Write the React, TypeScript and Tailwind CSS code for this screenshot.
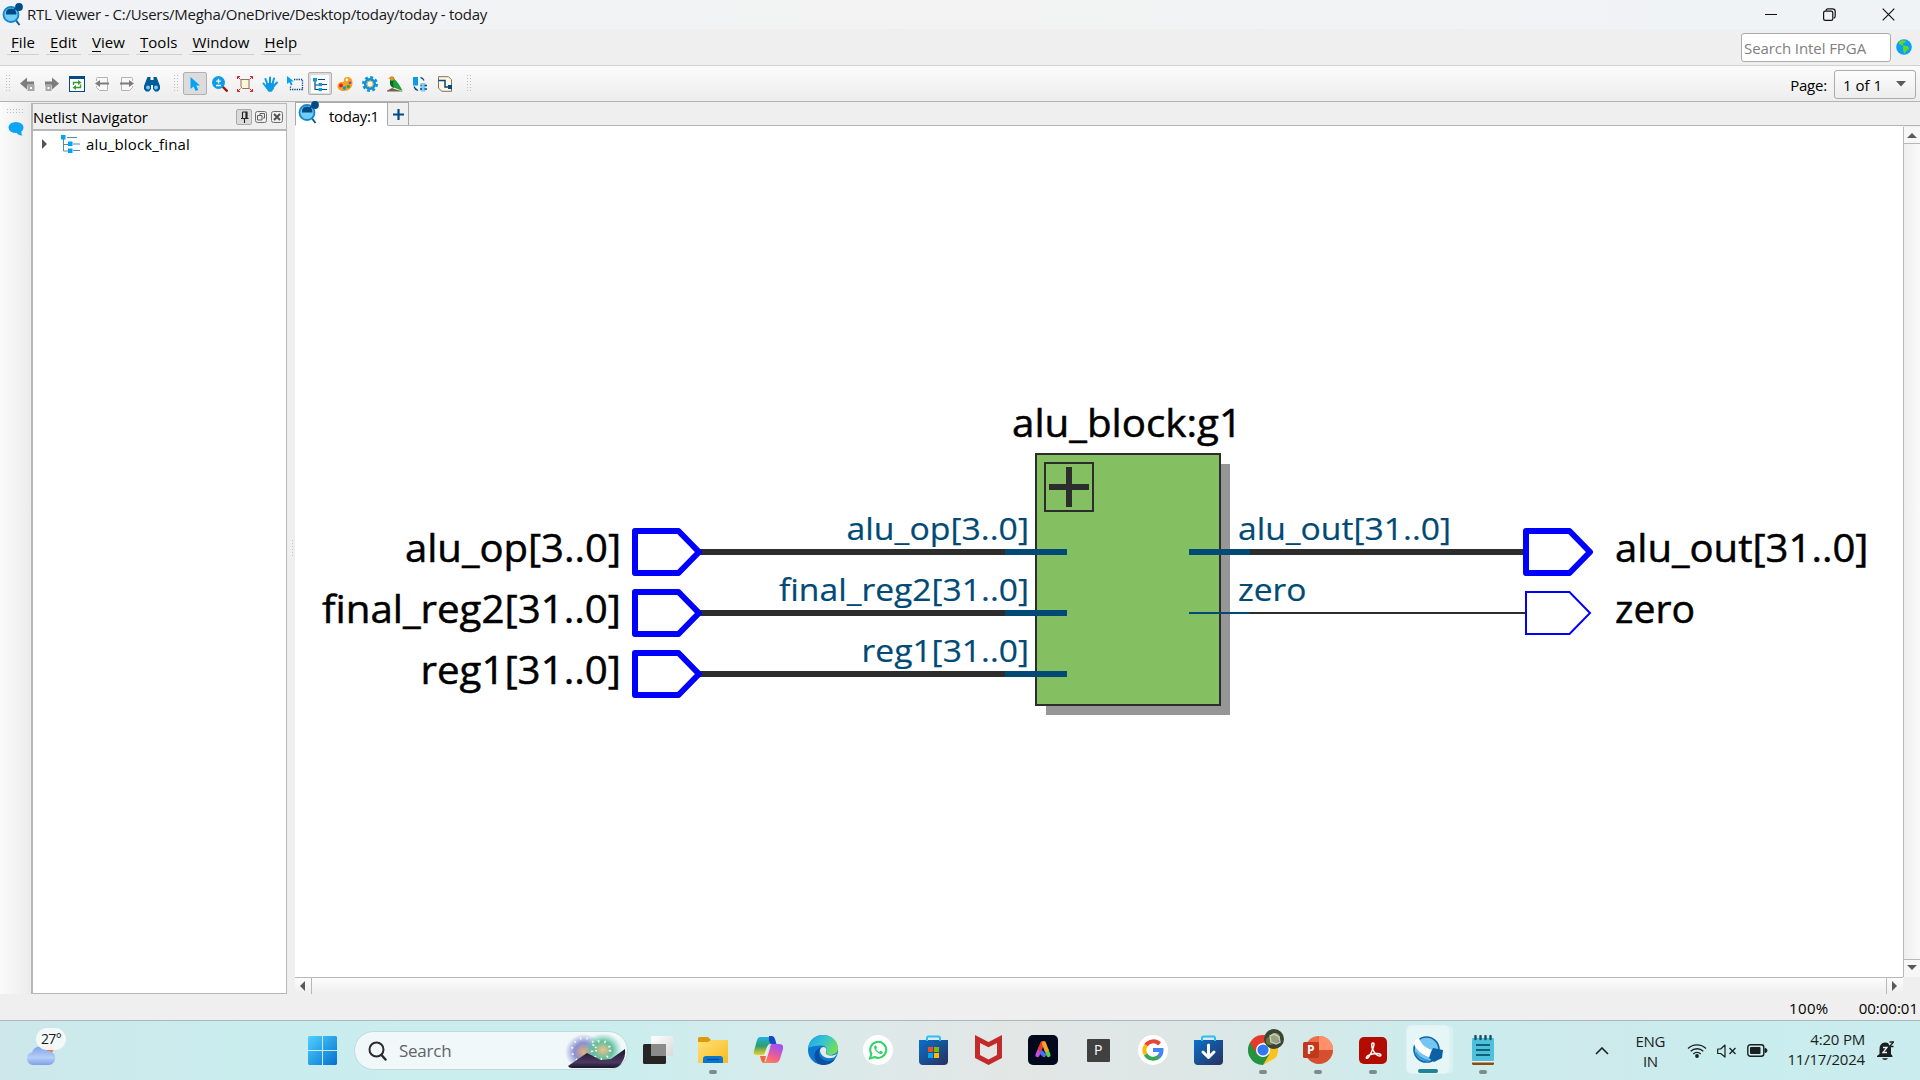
import type { ReactNode } from 'react';

const NAVY = '#004a86';
const SKY = '#00a3f5';

function Svg({ w, h, children, box }: { w: number; h: number; children: ReactNode; box?: string }) {
  return (
    <svg width={w} height={h} viewBox={box ?? `0 0 ${w} ${h}`} fill="none" className="block shrink-0">
      {children}
    </svg>
  );
}

function ViewerLogo() {
  return (
    <Svg w={21} h={24}>
      <path d="M12.500 15.500 17.500 22" stroke="#0b5a96" strokeWidth="2" />
      <circle cx="9" cy="11.500" r="7.500" fill="#6fcdf8" stroke="#1187c9" strokeWidth="1.800" />
      <path d="M4 11.500q-.5-6 5-6t5.500 6z" fill={NAVY} />
      <path d="M12 6.500l4-2" stroke={NAVY} strokeWidth="1.500" />
      <circle cx="17" cy="4" r="3.900" fill={NAVY} />
    </Svg>
  );
}

function GripV() {
  return (
    <svg width="5" height="17" className="block shrink-0" fill="#bdbdbd">
      {[0, 3, 6, 9, 12, 15].map((y) => (
        <g key={y}>
          <rect x="0" y={y} width="1" height="1" />
          <rect x="3" y={y} width="1" height="1" />
        </g>
      ))}
    </svg>
  );
}

const backIcon = (
  <Svg w={16} h={16}>
    <path d="M1 7.500 8 1.500v4h7v4H8v4z" fill="#7d7d7d" />
    <rect x="8.500" y="8" width="7" height="7" fill="#a8a8a8" />
    <rect x="11" y="11" width="2" height="2" fill="#fff" />
  </Svg>
);
const forwardIcon = (
  <Svg w={16} h={16}>
    <path d="M15 7.500 8 1.500v4H1v4h7v4z" fill="#7d7d7d" />
    <rect x="1.500" y="8" width="6" height="7" fill="#a8a8a8" />
    <rect x="3.500" y="11" width="2" height="2" fill="#fff" />
  </Svg>
);
const refreshIcon = (
  <Svg w={16} h={16}>
    <rect x=".5" y=".5" width="15" height="15" fill="#fff" stroke={NAVY} />
    <rect x="0" y="0" width="16" height="3" fill={NAVY} />
    <path d="M4.500 9V6.500h5.500M11.500 8.500V11.500H6" stroke="#3d9a35" strokeWidth="1.400" />
    <path d="M9 4l3.500 2.500L9 9zM7 9l-3.500 2.500L7 14z" fill="#3d9a35" />
  </Svg>
);
const pageBackIcon = (
  <Svg w={16} h={16}>
    <path d="M2.500 5V2.500q0-1 1-1h10v13h-8l-3-3V10" fill="#f8f8f8" stroke="#b4b4b4" />
    <path d="M1 7.500 6 4v2.500h9v2H6V11z" fill="#7d7d7d" />
  </Svg>
);
const pageForwardIcon = (
  <Svg w={16} h={16}>
    <path d="M13.500 5V2.500q0-1-1-1h-10v13h8l3-3V10" fill="#f8f8f8" stroke="#b4b4b4" />
    <path d="M15 7.500 10 4v2.500H1v2h9V11z" fill="#7d7d7d" />
  </Svg>
);
const binocularsIcon = (
  <Svg w={16} h={16}>
    <path d="M3.500 1h3v3h3V1h3l1 2.500L16 10v3l-2 2.500h-3L9 13V9H7v4l-2 2.500H2L0 13v-3l2.500-6.500z" fill="#005a9c" />
    <circle cx="4" cy="11.500" r="1.900" fill="#7ecbf3" />
    <circle cx="12" cy="11.500" r="1.900" fill="#7ecbf3" />
  </Svg>
);
const pointerIcon = (
  <Svg w={16} h={16}>
    <path d="M3.500 1v12l3-2.600L8.700 15l2.600-1.200L9.200 9.500H13z" fill={SKY} />
  </Svg>
);
const zoomIcon = (
  <Svg w={16} h={16}>
    <path d="M10.500 10.500l5 5" stroke="#a31515" strokeWidth="2.400" />
    <circle cx="6.500" cy="6.500" r="6.500" fill="#0c9ce8" />
    <path d="M6.500 2.800v4.600M4.200 5.100h4.600M4 9.500h5" stroke="#fff" strokeWidth="1.300" />
  </Svg>
);
const fitIcon = (
  <Svg w={16} h={16}>
    <path d="M4 3.500h8v9H5.500L4 11z" fill="#fdf4dc" stroke="#8a7560" />
    <g stroke="#e0202a">
      <path d="M.5 3V.5H3M.5.5l3 3M13 .5h2.500V3M15.500.5l-3 3M.5 13v2.500H3M.5 15.500l3-3M13 15.500h2.500V13M15.500 15.500l-3-3" />
    </g>
  </Svg>
);
const handIcon = (
  <Svg w={16} h={16}>
    <path
      d="M5 12 1.500 7.500M5.500 8.500 3.500 3M8 8V1.500M10.300 8.500 12 2.500M11.800 10l3.200-3.500"
      stroke="#0b9be6"
      strokeWidth="2"
      strokeLinecap="round"
    />
    <path d="M4 8.500 6 7h5l1.800 1.500-1 4.500-2.300 2.800H6.500L4 12z" fill="#0b9be6" />
  </Svg>
);
const selectIcon = (
  <Svg w={18} h={16}>
    <path d="M1 0v8l2.200-1.800L5 9.500l1.700-.9L5 5.500h3z" fill={SKY} />
    <path d="M8 3.500h8.500v10h-12V10" stroke={NAVY} strokeWidth="1.300" strokeDasharray="1.300 1" />
  </Svg>
);
const hierarchyIcon = (
  <Svg w={18} h={18}>
    <rect x="0" y="0" width="18" height="18" fill="#fff" />
    <path d="M4 5v9.500h4M4 10h4M7 4.500h7M11 9.500h5M11 14.500h5" stroke={NAVY} strokeWidth="1.200" />
    <rect x="2" y="3" width="4" height="3.500" fill="#0b9be6" />
    <rect x="7.500" y="8" width="3.500" height="3.200" fill="#0b9be6" />
    <rect x="7.500" y="13" width="3.500" height="3.200" fill="#0b9be6" />
  </Svg>
);
const paletteIcon = (
  <Svg w={16} h={16}>
    <path d="M10 1c4 0 5.500 2.500 5.500 6 0 4.500-3.500 8-8.500 8-4 0-6.500-2-6.500-4.500 0-3 2-4.500 4.500-4.500 1 0 2.500-.2 2-2C6.700 2.300 8 1 10 1z" fill="#f9a01f" />
    <circle cx="9.800" cy="3.800" r="1.300" fill="#fff" />
    <circle cx="13" cy="6.800" r="1.400" fill="#8e44c9" />
    <circle cx="4" cy="9.500" r="2" fill="#e0242a" />
    <circle cx="7.500" cy="12" r="1.800" fill="#0b9be6" />
    <circle cx="11.300" cy="10.500" r="1.800" fill="#3aa537" />
  </Svg>
);
const gearIcon = (
  <Svg w={16} h={16}>
    <circle cx="8" cy="8" r="6.700" stroke="#0b93dd" strokeWidth="2.600" strokeDasharray="2.900 2.360" />
    <circle cx="8" cy="8" r="4.700" fill="#fff7e0" stroke="#0b93dd" strokeWidth="2.800" />
    <circle cx="8" cy="8" r="3" stroke="#d9b45c" strokeWidth="1" />
  </Svg>
);
const birdIcon = (
  <Svg w={16} h={16}>
    <path d="M0 14.500 5 12l4 1.500L16 15.500H0z" fill="#7b5f50" />
    <path d="M3 1.200c2-1.500 4.500-.5 4.500 2C9.500 5 12.500 8 15.500 15L8 12C4 11.500 2.300 8 3.200 4z" fill="#1f9e3a" />
    <path d="M3.200 4.500C2.300 8 3.500 11 7 12c-1-2-1-5-.5-7z" fill="#0d6b25" />
    <path d="M1 2.500 3.200 1C5 0 7.300 1 7 3.500 5.500 5.500 3.500 4.500 3.200 3z" fill="#f28a1b" />
  </Svg>
);
const swapIcon = (
  <Svg w={16} h={16}>
    <rect x="1" y="1" width="5" height="8.500" fill="#0b9be6" />
    <rect x="8.500" y="7" width="5" height="8.500" fill="#7ecbf3" />
    <path d="M8.500 1.500q2.500.5 3.500 3M2 10.500q1 3 4 4M8.500 9.500h1M12.500 9.500h2.500M8 13h2M12.500 13h2.500" stroke={NAVY} strokeWidth="1.300" />
  </Svg>
);
const netPageIcon = (
  <Svg w={16} h={16}>
    <path d="M1.500.7h10l3 3v11.600H5l-3.500-3z" fill="#fff8e3" stroke="#80705c" />
    <path d="M1.500 4.500h6.500v6.500h7" stroke={NAVY} strokeWidth="1.500" />
    <rect x="11" y="9" width="4" height="4" fill={NAVY} />
  </Svg>
);

function Cell({ children }: { children: ReactNode }) {
  return <div className="flex h-6 w-[25px] shrink-0 items-center justify-center">{children}</div>;
}

function PressedCell({ children }: { children: ReactNode }) {
  return (
    <div className="flex h-[23px] w-[25px] shrink-0 items-center justify-center">
      <div className="flex h-[23px] w-6 shrink-0 items-center justify-center rounded-[2px] border border-[#b0b0b0] bg-[#dcdcdc]">
        {children}
      </div>
    </div>
  );
}

const menus = ['File', 'Edit', 'View', 'Tools', 'Window', 'Help'];

function TitleBar() {
  return (
    <div className="flex h-[29px] items-center bg-[linear-gradient(90deg,#f0f2f6_0%,#f3f3f3_50%,#eff3f6_100%)]">
      <div className="mr-1 ml-[2px]">
        <ViewerLogo />
      </div>
      <span className="text-[15px] tracking-[-0.275px] text-[#191919]">
        RTL Viewer - C:/Users/Megha/OneDrive/Desktop/today/today - today
      </span>
      <div className="mr-[25px] ml-auto flex items-center">
        <Svg w={12} h={12}>
          <path d="M0 5.500h12" stroke="#111" />
        </Svg>
        <div className="ml-[46px]">
          <Svg w={13} h={13}>
            <rect x=".6" y="3.100" width="9.200" height="9.200" rx="1.600" stroke="#111" strokeWidth="1.200" />
            <path d="M3 2.800q0-2 2-2h4.500q2.700 0 2.700 2.700V8q0 2-1.500 2.200" stroke="#111" strokeWidth="1.200" />
          </Svg>
        </div>
        <div className="ml-[46px]">
          <Svg w={13} h={13}>
            <path d="M.7.7l11.600 11.600M12.300.7.7 12.300" stroke="#111" strokeWidth="1.200" />
          </Svg>
        </div>
      </div>
    </div>
  );
}

function MenuBar() {
  return (
    <div className="flex h-[37px] items-start border-b border-[#d2d2d2] bg-[#efefef] pl-[7px]">
      <div className="flex gap-[7px]">
        {menus.map((m) => (
          <div key={m} className="flex h-[26px] items-center border-b border-[#d0d0d0] px-1 pt-[2px] text-[15px] tracking-[0.06px]">
            <span>
              <span className="underline underline-offset-[3px]">{m[0]}</span>
              {m.slice(1)}
            </span>
          </div>
        ))}
      </div>
      <div className="mt-1 mr-2 ml-auto flex items-center">
        <div className="flex h-[29px] w-[150px] items-center rounded-[3px] border border-[#ababab] bg-white pt-[2px] pl-[2px] text-[15px] tracking-[-0.08px] whitespace-nowrap text-[#808080]">
          Search Intel FPGA
        </div>
        <div className="mt-[-2px] ml-[5px]">
          <Svg w={16} h={16} box="0 0 17 17">
            <circle cx="8.500" cy="8.500" r="8.300" fill="#0b9ff5" />
            <path d="M3.500 2.500C6 .8 9 1 11 2l-1.500 2-2.500.5L8 6.500 6 7 3 5z M7.500 7l5.500.8.8 2.700-2.800 2.200-2 3.300-1.500-3.800z" fill="#62d81f" />
          </Svg>
        </div>
      </div>
    </div>
  );
}

function ToolBar() {
  return (
    <div className="flex h-9 items-center border-b border-[#b4b4b4] bg-gradient-to-b from-[#fbfbfb] to-[#ededed] pl-[6px]">
      <GripV />
      <div className="ml-[3px] flex">
        <Cell>{backIcon}</Cell>
        <Cell>{forwardIcon}</Cell>
        <Cell>{refreshIcon}</Cell>
        <Cell>{pageBackIcon}</Cell>
        <Cell>{pageForwardIcon}</Cell>
        <Cell>{binocularsIcon}</Cell>
      </div>
      <div className="ml-[10px]">
        <GripV />
      </div>
      <div className="ml-[3px] flex items-center">
        <PressedCell>{pointerIcon}</PressedCell>
        <Cell>{zoomIcon}</Cell>
        <Cell>{fitIcon}</Cell>
        <Cell>{handIcon}</Cell>
        <Cell>{selectIcon}</Cell>
        <PressedCell>{hierarchyIcon}</PressedCell>
        <Cell>{paletteIcon}</Cell>
        <Cell>{gearIcon}</Cell>
        <Cell>{birdIcon}</Cell>
        <Cell>{swapIcon}</Cell>
        <Cell>{netPageIcon}</Cell>
      </div>
      <div className="ml-[10px]">
        <GripV />
      </div>
      <div className="mr-1 ml-auto flex items-center text-[15px]">
        <span className="mt-[3px] mr-[7px] tracking-[-0.2px]">Page:</span>
        <div className="mt-[1px] flex h-[29px] w-[82px] items-center rounded-[3px] border border-[#ababab] bg-gradient-to-b from-[#fdfdfd] to-[#ececec] pl-[8px]">
          <span className="mt-[2px]">1 of 1</span>
          <div className="ml-[14px]">
            <Svg w={10} h={6}>
              <path d="M0 0h10L5 5.500z" fill="#5a5a5a" />
            </Svg>
          </div>
        </div>
      </div>
    </div>
  );
}

function NetlistPanel() {
  return (
    <div className="mt-px flex w-64 shrink-0 flex-col border border-l-2 border-[#b7b7b7] bg-white">
      <div className="flex h-[27px] shrink-0 items-center border-b-2 border-[#b7b7b7] bg-[#efefef] pr-[3px]">
        <span className="mt-[2px] text-[15px] tracking-[-0.12px]">Netlist Navigator</span>
        <div className="ml-auto flex items-center">
          <div className="flex h-4 w-4 items-center justify-center rounded-[2px] border border-[#aaa] bg-[#dadada]">
            <Svg w={9} h={12}>
              <path d="M2.500 1h4.500v6M2.500 1v6M6 1v6M1 7.500h7.500M4.500 8v4" stroke="#222" strokeWidth="1.100" />
            </Svg>
          </div>
          <div className="ml-[3px]">
            <Svg w={12} h={12}>
              <rect x=".5" y=".5" width="11" height="11" rx="2" fill="#eee" stroke="#707070" />
              <path d="M5 4V2.500h4.500V7H8M2.500 4.500H7V9H2.500z" stroke="#606060" />
            </Svg>
          </div>
          <div className="ml-1">
            <Svg w={12} h={12}>
              <rect x=".5" y=".5" width="11" height="11" rx="2" fill="#eee" stroke="#707070" />
              <path d="M3 3l6 6M9 3 3 9" stroke="#505050" strokeWidth="1.900" />
            </Svg>
          </div>
        </div>
      </div>
      <div className="flex h-[25px] items-center pl-[9px]">
        <Svg w={5} h={10}>
          <path d="M0 0l5 5-5 5z" fill="#555" />
        </Svg>
        <div className="ml-[14px]">
          <Svg w={19} h={18}>
            <path d="M2.500 3v13H8M2.500 9.500H8M6 2.500h10M12 9h7M12 15.500h7" stroke="#5a87ad" />
            <rect x="0" y="0" width="4.500" height="4.500" fill={SKY} />
            <rect x="7" y="6.500" width="4.500" height="4.500" fill={SKY} />
            <rect x="7" y="13.500" width="4.500" height="4.500" fill={SKY} />
          </Svg>
        </div>
        <span className="mt-[2px] ml-[6px] text-[15px] tracking-[0.15px]">alu_block_final</span>
      </div>
    </div>
  );
}

type Label = { t: string; x: number; y: number; w: number };
const portLabels: Label[] = [
  { t: 'alu_op[3..0]', x: 405, y: 562, w: 216 },
  { t: 'final_reg2[31..0]', x: 322, y: 623, w: 299 },
  { t: 'reg1[31..0]', x: 420.5, y: 684, w: 200.5 },
  { t: 'alu_block:g1', x: 1012, y: 437, w: 230 },
  { t: 'alu_out[31..0]', x: 1615, y: 562, w: 253.5 },
  { t: 'zero', x: 1615, y: 623, w: 80 },
];
const pinLabels: Label[] = [
  { t: 'alu_op[3..0]', x: 846.5, y: 540, w: 182.5 },
  { t: 'final_reg2[31..0]', x: 779, y: 601, w: 250 },
  { t: 'reg1[31..0]', x: 861.5, y: 662, w: 167.5 },
  { t: 'alu_out[31..0]', x: 1238, y: 540, w: 213 },
  { t: 'zero', x: 1238, y: 601, w: 68.5 },
];

function Schematic() {
  return (
    <svg width="1608" height="851" viewBox="295 126 1608 851" fill="none" className="block font-['Open_Sans',sans-serif]">
      <rect x="1046" y="464" width="184" height="251" fill="#969696" />
      <rect x="1036" y="454" width="184" height="251" fill="#84c061" stroke="#2d2d2d" strokeWidth="2" />
      <rect x="1045" y="463" width="48" height="48" stroke="#2d2d2d" strokeWidth="2" />
      <path d="M1049 487h40M1069 467v40" stroke="#2d2d2d" strokeWidth="6" />
      <path d="M700 552h305M700 613h305M700 674h305M1250 552h276" stroke="#2d2d2d" strokeWidth="6" />
      <path d="M1005 552h62M1005 613h62M1005 674h62M1189 552h61" stroke="#004a75" strokeWidth="6" />
      <path d="M1189 613h61" stroke="#004a75" strokeWidth="2" />
      <path d="M1250 613h275" stroke="#2d2d2d" strokeWidth="2" />
      {[552, 613, 674].map((y) => (
        <path key={y} d={`M635 ${y - 21}h43.500L699 ${y}l-20.500 21H635z`} fill="#fff" stroke="#00f" strokeWidth="6" strokeLinejoin="round" />
      ))}
      <path d="M1526 531h43.500L1590 552l-20.500 21H1526z" stroke="#00f" strokeWidth="6" strokeLinejoin="round" />
      <path d="M1526 592h43.500L1590 613l-20.500 21H1526z" fill="#fff" stroke="#00f" strokeWidth="2" />
      {portLabels.map((l) => (
        <text key={l.t} x={l.x} y={l.y} textLength={l.w} lengthAdjust="spacingAndGlyphs" fontSize="38" fill="#000" stroke="#000" strokeWidth=".5">
          {l.t}
        </text>
      ))}
      {pinLabels.map((l) => (
        <text key={l.t} x={l.x} y={l.y} textLength={l.w} lengthAdjust="spacingAndGlyphs" fontSize="31.500" fill="#004a75" stroke="#004a75" strokeWidth=".2">
          {l.t}
        </text>
      ))}
    </svg>
  );
}

function Workspace() {
  return (
    <div className="flex min-w-0 flex-1 flex-col">
      <div className="flex h-6 shrink-0 items-end border-b border-[#b4b4b4] bg-[#efefef]">
        <div className="mb-[-1px] flex h-6 w-[93px] items-center border border-[#a8a8a8] border-b-white bg-white pl-[2px]">
          <div className="mt-[-3px]">
            <ViewerLogo />
          </div>
          <span className="mt-[4px] ml-[10px] text-[15px] tracking-[-0.3px]">today:1</span>
        </div>
        <div className="flex h-[23px] w-[21px] items-center justify-center border border-b-0 border-l-0 border-[#a8a8a8] bg-[#f0f0f0]">
          <Svg w={11} h={11}>
            <path d="M5.500 0v11M0 5.500h11" stroke={NAVY} strokeWidth="2.200" />
          </Svg>
        </div>
      </div>
      <div className="flex h-[851px]">
        <div className="w-[1608px] shrink-0 bg-white">
          <Schematic />
        </div>
        <div className="mt-px flex w-[17px] flex-col justify-between border-l border-[#b8b8b8] bg-gradient-to-r from-[#eee] to-[#fafafa]">
          <div className="flex h-[17px] items-center justify-center border-b border-[#b8b8b8] bg-[#f7f7f7]">
            <Svg w={10} h={5}>
              <path d="M0 5h10L5 0z" fill="#5a5a5a" />
            </Svg>
          </div>
          <div className="flex h-[18px] items-center justify-center border-t border-[#b8b8b8] bg-[#f7f7f7] pb-[2px]">
            <Svg w={10} h={5}>
              <path d="M0 0h10L5 5z" fill="#5a5a5a" />
            </Svg>
          </div>
        </div>
      </div>
      <div className="flex h-[17px]">
        <div className="flex w-[1608px] justify-between border-t border-[#b8b8b8] bg-gradient-to-b from-[#fcfcfc] to-[#eee]">
          <div className="flex w-[17px] items-center justify-center border-r border-[#b8b8b8] pr-[2px]">
            <Svg w={5} h={10}>
              <path d="M5 0v10L0 5z" fill="#5a5a5a" />
            </Svg>
          </div>
          <div className="flex w-[17px] items-center justify-center border-l border-[#b8b8b8] pr-[2px]">
            <Svg w={5} h={10}>
              <path d="M0 0v10l5-5z" fill="#5a5a5a" />
            </Svg>
          </div>
        </div>
      </div>
    </div>
  );
}

const taskView = (
  <Svg w={30} h={28}>
    <defs>
      <linearGradient id="tvl" x1="0" y1="0" x2="1" y2="1">
        <stop stopColor="#fff" />
        <stop offset="1" stopColor="#d9d9d9" />
      </linearGradient>
    </defs>
    <rect x="0" y="8" width="23" height="20" rx="1.500" fill="#262524" />
    <rect x="8" y="0" width="22" height="20" rx="1" fill="url(#tvl)" />
    <rect x="8" y="8" width="15" height="12" fill="#8b8b8b" />
  </Svg>
);
const folder = (
  <Svg w={30} h={28}>
    <defs>
      <linearGradient id="fo" x1="0" y1="0" x2="1" y2="1">
        <stop stopColor="#ffe07a" />
        <stop offset="1" stopColor="#f8bb1a" />
      </linearGradient>
    </defs>
    <path d="M0 2.500Q0 1 1.500 1H10l3 3h15.500Q30 4 30 5.500V12H0z" fill="#dd9a07" />
    <path d="M0 6h10l3-2h17v23H0z" fill="url(#fo)" />
    <path d="M5 27v-4q0-3 3-3h14q3 0 3 3v4z" fill="#0b76cf" />
    <path d="M9 23.500h12" stroke="#0a4d8f" strokeWidth="1.200" />
  </Svg>
);
const copilot = (
  <Svg w={30} h={28}>
    <defs>
      <linearGradient id="cpa" x1="0" y1="0" x2="0" y2="1">
        <stop stopColor="#19b4e8" />
        <stop offset=".5" stopColor="#2f9e6b" />
        <stop offset="1" stopColor="#f6cf28" />
      </linearGradient>
      <linearGradient id="cpb" x1="0" y1="1" x2=".5" y2="0">
        <stop stopColor="#ff8a4c" />
        <stop offset=".5" stopColor="#ee5d90" />
        <stop offset="1" stopColor="#a352f0" />
      </linearGradient>
    </defs>
    <path d="M7 1h13l2 7h-4l-4 6-3 5H3Q0 19 1 15L4 4q1-3 3-3z" fill="url(#cpa)" />
    <path d="M16 0h3q2 0 3 3l1.500 5H19q-2 0-3-3z" fill="#1947c4" />
    <path d="M18 8h8q5 0 4 5l-3 10q-1.500 4-5 4H9l3-1q1-.5 2-4l3-10z" fill="url(#cpb)" />
    <path d="M7 20h6l3-9q1-3 3-3h-2q-2 0-3 3l-3 8z" fill="#e9eef2" />
    <path d="M7 20h6q-1 5-2 7-2 0-3-3z" fill="#f0693a" />
  </Svg>
);
const edge = (
  <Svg w={30} h={30}>
    <defs>
      <linearGradient id="ed1" x1="0" y1="0" x2="1" y2=".5">
        <stop stopColor="#1d9fe0" />
        <stop offset=".5" stopColor="#33c3d8" />
        <stop offset="1" stopColor="#6ede5c" />
      </linearGradient>
    </defs>
    <circle cx="15" cy="15" r="15" fill="#0f78d0" />
    <path d="M0 13C1 5 7 0 15 0c9 0 15 6 15 13 0 5-4 7-8 7-3 0-4.500-1.500-3.500-3 1.500-3-1-6.500-5-6.500C7 10.500 2 12 0 13z" fill="url(#ed1)" />
    <path d="M11 16c-1 6 4 11 11 10 2-.3 4-1.200 5.500-2.500C25 28 20 30 15 30 9 29.500 5 24 7 18c1-3 3.500-5 6-5z" fill="#0c4fa0" />
    <path d="M12 15c1-4 6-4 6.500-.5.300 1.500-1 2.500-.5 4 1.500 3 9 2.500 11 0-1 2.500-3 4.500-6 4.500-6 1-11-3-11-8z" fill="#e4eceb" />
  </Svg>
);
const whatsapp = (
  <Svg w={30} h={30}>
    <circle cx="15" cy="15" r="15" fill="#fff" />
    <path d="M7 23.500l1.300-4.500A8 8 0 1 1 11.500 22z" stroke="#2fd366" strokeWidth="2" />
    <path d="M12 10.500c-1.500 1-1 3 .5 5s4 3.500 5.500 3.500 2-1.500 1.800-2l-2.300-1.200-1.300 1.200c-1.500-.6-2.500-1.600-3-3l.8-1.200-.9-2.200z" fill="#2fd366" />
  </Svg>
);
function BagBase({ children, id }: { children: ReactNode; id: string }) {
  return (
    <Svg w={29} h={30}>
      <defs>
        <linearGradient id={id} x1="0" y1="0" x2="1" y2="1">
          <stop stopColor="#0a70c8" />
          <stop offset="1" stopColor="#28305f" />
        </linearGradient>
      </defs>
      <path d="M0 5h29v21q0 4-4 4H4q-4 0-4-4z" fill={`url(#${id})`} />
      <path d="M8 6V3q0-1.500 1.500-1.500h10Q21 1.500 21 3v3" stroke="#29c0f5" strokeWidth="2" />
      {children}
    </Svg>
  );
}
const store = (
  <BagBase id="bagA">
    <rect x="9" y="12" width="5" height="5" fill="#f25022" />
    <rect x="15" y="12" width="5" height="5" fill="#7fba00" />
    <rect x="9" y="18" width="5" height="5" fill="#00a4ef" />
    <rect x="15" y="18" width="5" height="5" fill="#ffb900" />
  </BagBase>
);
const mcafee = (
  <Svg w={27} h={30}>
    <path d="M0 0l13.500 7L27 0v23l-13.500 7L0 23z" fill="#c32a2b" />
    <path d="M5 8l8.500 4.200L22 8v12l-8.500 4.500L5 20z" fill="#e4e5e4" />
  </Svg>
);
const adobe = (
  <Svg w={30} h={30}>
    <rect width="30" height="30" rx="5" fill="#03091c" />
    <g strokeWidth="4.200" strokeLinecap="round" strokeLinejoin="round">
      <path d="M9.500 20l2.500-6" stroke="#d04be0" />
      <path d="M12 14l2.500-6h1" stroke="#e8402c" />
      <path d="M13.500 17.500l2.500 2.500" stroke="#4a6cf7" />
      <path d="M20.500 20l-2-5" stroke="#5ccf50" />
      <path d="M18.500 15l-2.500-6.500" stroke="#f7a32b" />
    </g>
  </Svg>
);
const pApp = (
  <div className="flex h-[23px] w-[23px] items-center justify-center rounded-[1px] bg-[#404040] text-[14px] leading-none text-white">P</div>
);
const google = (
  <Svg w={30} h={30}>
    <circle cx="15" cy="15" r="15" fill="#fff" />
    <g strokeWidth="4">
      <path d="M8 10.200A8.700 8.700 0 0 1 21.500 9" stroke="#ea4335" />
      <path d="M7.700 19.500a8.700 8.700 0 0 1 .3-9.300" stroke="#fbbc05" />
      <path d="M21 21.500a8.700 8.700 0 0 1-13.300-2" stroke="#34a853" />
      <path d="M15 15h8.500a8.600 8.600 0 0 1-2.800 6.700" stroke="#4285f4" />
    </g>
  </Svg>
);
const download = (
  <BagBase id="bagB">
    <path d="M14.500 10v12M9 17l5.500 5.500L20 17" stroke="#fff" strokeWidth="3" strokeLinecap="round" strokeLinejoin="round" />
  </BagBase>
);
const chrome = (
  <div className="relative">
    <Svg w={30} h={30}>
      <path d="M15 15V0a15 15 0 0 1 13 22.500L15 30z" fill="#fcc31e" />
      <path d="M15 15 2 7.500A15 15 0 0 0 15 30l6.500-11z" fill="#23933f" />
      <path d="M2 7.500a15 15 0 0 1 26 0H15L8.500 18.700z" fill="#e33b2e" />
      <circle cx="15" cy="15" r="7" fill="#fff" />
      <circle cx="15" cy="15" r="5.600" fill="#2f78f0" />
    </Svg>
    <div className="absolute -top-[6px] left-4">
      <Svg w={20} h={20}>
        <circle cx="10" cy="10" r="10" fill="#3a4632" />
        <circle cx="6" cy="12" r="4" fill="#66783b" />
        <circle cx="11" cy="9" r="5" fill="#9aa47a" />
        <path d="M6 7l4-2 5 3 1 5-4 2-5-2z" stroke="#c9c9c4" strokeWidth="1.400" />
      </Svg>
    </div>
  </div>
);
const powerpoint = (
  <div className="relative">
    <Svg w={30} h={28}>
      <circle cx="16" cy="14" r="14" fill="#ec6c4b" />
      <path d="M16 0a14 14 0 0 1 14 14H16z" fill="#ff9069" />
      <path d="M16 14h14a14 14 0 0 1-25 8.500z" fill="#d5502f" />
      <rect x="0" y="6" width="16" height="16" rx="1.500" fill="#c0391d" />
    </Svg>
    <span className="absolute top-[6px] left-[4px] text-[12px] leading-4 font-bold text-white">P</span>
  </div>
);
const acrobat = (
  <Svg w={28} h={27}>
    <rect width="28" height="27" rx="5" fill="#b30b00" />
    <path d="M14 6c-2 0-1.500 3.500 0 7s5 6.500 7 6 .5-3-4-2.500-8.500 1.500-9.500 3.500 1.500 2 3.500-2 3.500-7.500 3.800-9.500S15 6 14 6z" stroke="#fff" strokeWidth="1.500" />
  </Svg>
);
const quartus = (
  <Svg w={30} h={28}>
    <circle cx="13.500" cy="13.500" r="12.500" fill="#74c5f2" stroke="#1063a5" strokeWidth="1.600" />
    <path d="M2 4 6 2C8 8 13 13 20 14l-1 8C10 20 3 14 1 8z" fill="#fff" />
    <path d="M2 16c3 5 8 8 14 9" stroke="#3198d8" strokeWidth="2" />
    <path d="M18 16l2-4 10 2-1 8-8 4-5-4z" fill="#0b61a4" />
  </Svg>
);
const notepad = (
  <Svg w={22} h={30}>
    <path d="M0 27h22v1.500q0 1.500-1.500 1.500h-19Q0 30 0 28.500z" fill="#8c4a10" />
    <rect x="0" y="3" width="22" height="23" rx="1" fill="#4fc0dc" />
    <rect x="0" y="26" width="22" height="1.500" fill="#eee" />
    <path d="M4 10h14M4 15h14M4 20h14" stroke="#0e6377" strokeWidth="2" />
    <path d="M3.500 1v3M8.500 1v3M13.500 1v3M18.500 1v3" stroke="#14506a" strokeWidth="2.400" strokeLinecap="round" />
  </Svg>
);

const apps: { k: string; icon: ReactNode; state?: 'open' | 'active' }[] = [
  { k: 'taskview', icon: taskView },
  { k: 'folder', icon: folder, state: 'open' },
  { k: 'copilot', icon: copilot },
  { k: 'edge', icon: edge },
  { k: 'whatsapp', icon: whatsapp },
  { k: 'store', icon: store },
  { k: 'mcafee', icon: mcafee },
  { k: 'adobe', icon: adobe },
  { k: 'p', icon: pApp },
  { k: 'google', icon: google },
  { k: 'download', icon: download },
  { k: 'chrome', icon: chrome, state: 'open' },
  { k: 'powerpoint', icon: powerpoint, state: 'open' },
  { k: 'acrobat', icon: acrobat, state: 'open' },
  { k: 'quartus', icon: quartus, state: 'active' },
  { k: 'notepad', icon: notepad, state: 'open' },
];

function Taskbar() {
  return (
    <div className="flex h-[60px] items-center border-t border-[#a9b9bb] bg-[linear-gradient(90deg,#cde7ea_0%,#c9edee_14%,#cbedee_33%,#dde9e9_45%,#e3e7e6_53%,#dce7e6_63%,#cbeced_75%,#cde9eb_83%,#c9edee_90%,#cbecee_100%)]">
      <div className="relative ml-[26px] h-[50px] w-[42px]">
        <div className="absolute top-[18px] left-0">
          <Svg w={31} h={21}>
            <defs>
              <linearGradient id="cl" x1="0" y1="0" x2="0" y2="1">
                <stop stopColor="#7fa3ec" />
                <stop offset=".6" stopColor="#b5cff8" />
                <stop offset="1" stopColor="#7da0e8" />
              </linearGradient>
            </defs>
            <circle cx="22" cy="3" r="6.500" fill="#ee7a2c" />
            <path d="M7 21a6.500 6.500 0 0 1-1-12.800A8.500 8.500 0 0 1 21.500 7a7 7 0 0 1 1.500 14z" fill="url(#cl)" />
          </Svg>
        </div>
        <div className="absolute top-[2px] left-[10px] flex h-[22px] w-[30px] items-center justify-center rounded-full bg-[#f4f9fa]/95 pt-[1px] text-[14px] leading-5 tracking-[-0.7px] text-[#1b1b1b]">
          27°
        </div>
      </div>
      <div className="ml-[240px]">
        <Svg w={29} h={29}>
          <defs>
            <linearGradient id="win" gradientUnits="userSpaceOnUse" x1="0" y1="0" x2="29" y2="29">
              <stop stopColor="#4fd0ff" />
              <stop offset="1" stopColor="#0570d0" />
            </linearGradient>
          </defs>
          <path d="M1 0h13v14H0V1zM15 0h13l1 1v13H15zM0 15h14v14H1l-1-1zM15 15h14v13l-1 1H15z" fill="url(#win)" />
        </Svg>
      </div>
      <div className="ml-[17px] flex h-[39px] w-[274px] items-center rounded-full border border-[#c2d9db] bg-[#f0f8f9] pl-[13px]">
        <Svg w={19} h={20}>
          <circle cx="8.500" cy="8.500" r="7" stroke="#2b2b2b" strokeWidth="2" />
          <path d="M13.500 14l4 4.500" stroke="#2b2b2b" strokeWidth="2.500" strokeLinecap="round" />
        </Svg>
        <span className="ml-[12px] text-[17px] tracking-[-0.25px] text-[#5f6466]">Search</span>
        <div className="mr-[1px] ml-auto">
          <Svg w={61} h={34}>
            <defs>
              <radialGradient id="fwa">
                <stop stopColor="#e9b070" />
                <stop offset=".5" stopColor="#8a8fd0" />
                <stop offset="1" stopColor="#8d97e0" stopOpacity="0" />
              </radialGradient>
              <radialGradient id="fwb">
                <stop stopColor="#f4c08a" />
                <stop offset=".5" stopColor="#5fbfa0" />
                <stop offset="1" stopColor="#6fd0b5" stopOpacity="0" />
              </radialGradient>
              <linearGradient id="hill" x1="0" y1="0" x2="0" y2="1">
                <stop stopColor="#16152f" />
                <stop offset=".7" stopColor="#4c3960" />
                <stop offset="1" stopColor="#16152f" />
              </linearGradient>
            </defs>
            <ellipse cx="19" cy="18" rx="19" ry="18" fill="url(#fwa)" />
            <ellipse cx="38" cy="16" rx="19" ry="17" fill="url(#fwb)" />
            <circle cx="19" cy="16" r="12" stroke="#fff6dd" strokeWidth="2" strokeDasharray="1.500 5" />
            <circle cx="36" cy="16" r="9" stroke="#fff6dd" strokeWidth="2.500" strokeDasharray="1.500 5" />
            <path d="M3 32 22 19l14 7 10-1 14-10q1 8-4 15-3 4-8 4H7q-3 0-4-2z" fill="url(#hill)" />
          </Svg>
        </div>
      </div>
      <div className="ml-[3px] flex">
        {apps.map((a) => (
          <div key={a.k} className="flex h-[59px] w-[54.98px] flex-col items-center">
            {a.state === 'active' ? (
              <div className="relative mt-[4px] flex h-[49px] w-11 items-center justify-center rounded-[5px] border border-[#dff1f2] bg-[#e6f5f6] shadow-[4px_0_0_-1px_#daf1f2]">
                {a.icon}
                <div className="absolute bottom-0 h-1 w-5 rounded-full bg-[#1f8494]" />
              </div>
            ) : (
              <>
                <div className="mt-[13px] flex h-8 items-center justify-center">{a.icon}</div>
                {a.state === 'open' && <div className="mt-1 h-1 w-2 rounded-full bg-[#7c8b8c]" />}
              </>
            )}
          </div>
        ))}
      </div>
      <div className="mr-[26px] ml-auto flex items-center text-[15px] text-[#1b1f20]">
        <Svg w={14} h={8}>
          <path d="M1 7l6-6 6 6" stroke="#1b1f20" strokeWidth="1.600" />
        </Svg>
        <div className="ml-[26px] flex w-[30px] flex-col items-center leading-5 tracking-[-0.3px]">
          <span>ENG</span>
          <span>IN</span>
        </div>
        <div className="ml-[22px]">
          <Svg w={20} h={15}>
            <path d="M1 5.500a13 13 0 0 1 18 0M3.700 8.300a9 9 0 0 1 12.600 0M6.300 11a5.200 5.200 0 0 1 7.400 0" stroke="#1b1f20" strokeWidth="1.300" />
            <circle cx="10" cy="13" r="1.900" fill="#1b1f20" />
          </Svg>
        </div>
        <div className="ml-[10px]">
          <Svg w={20} h={14}>
            <path d="M.7 5v4.500h3L8 13V1L3.700 5z" stroke="#1b1f20" strokeWidth="1.200" strokeLinejoin="round" />
            <path d="M12.500 4l6 6M18.500 4l-6 6" stroke="#1b1f20" strokeWidth="1.300" />
          </Svg>
        </div>
        <div className="ml-[10px]">
          <Svg w={21} h={13}>
            <rect x=".8" y=".8" width="16" height="11.400" rx="2.500" stroke="#1b1f20" strokeWidth="1.400" />
            <rect x="3" y="3" width="10.500" height="7" rx="1" fill="#1b1f20" />
            <path d="M18 4.500q2 0 2 2t-2 2z" fill="#1b1f20" stroke="#1b1f20" />
          </Svg>
        </div>
        <div className="mt-[-4px] ml-[19px] flex flex-col items-end leading-5 tracking-[-0.2px]">
          <span>4:20 PM</span>
          <span>11/17/2024</span>
        </div>
        <div className="ml-[12px] w-[17px]">
          <Svg w={17} h={19}>
            <path d="M2.500 13V8q0-6 5.500-6.500 2 0 3 .5l2 3.500 1 1V13l1.500 2v1H0v-1z" fill="#1b1f20" />
            <path d="M5 17.200h6q-1 1.800-3 1.800t-3-1.800z" fill="#1b1f20" />
            <path d="M6 6.500h4l-4 5h4" stroke="#e7f3f4" strokeWidth="1.300" />
            <path d="M12.500 1h4l-4 4.500h4" stroke="#1b1f20" strokeWidth="1.300" />
          </Svg>
        </div>
      </div>
    </div>
  );
}

export default function App() {
  return (
    <div className="flex h-[1080px] w-[1920px] flex-col overflow-hidden bg-[#efefef] font-['Open_Sans',sans-serif] text-black">
      <TitleBar />
      <MenuBar />
      <ToolBar />
      <div className="flex h-[892px] shrink-0">
        <div className="flex w-[31px] shrink-0 flex-col items-center bg-gradient-to-r from-[#fbfbfb] to-[#ececec] pt-[7px]">
          <svg width="17" height="5" fill="#bdbdbd">
            {[0, 3, 6, 9, 12, 15].map((x) => (
              <g key={x}>
                <rect x={x} y="0" width="1" height="1" />
                <rect x={x} y="3" width="1" height="1" />
              </g>
            ))}
          </svg>
          <div className="mt-2">
            <Svg w={16} h={14}>
              <ellipse cx="8" cy="5.500" rx="7.500" ry="5.500" fill="#09a5f7" />
              <path d="M8 9.500h5.500q-.5 2.500 1 4Q10 13.500 8 10z" fill="#09a5f7" />
            </Svg>
          </div>
        </div>
        <NetlistPanel />
        <div className="flex w-2 shrink-0 items-center justify-end pr-[1px]">
          <svg width="2" height="16" fill="#c4c4c4">
            {[0, 3, 6, 9, 12, 15].map((y) => (
              <rect key={y} x="0" y={y} width="1" height="1" />
            ))}
          </svg>
        </div>
        <Workspace />
      </div>
      <div className="flex h-[26px] shrink-0 items-center justify-end pr-[2px] text-[15px]">
        <span className="mt-[3px] mr-[30px] tracking-[0.4px]">100%</span>
        <span className="mt-[3px]">00:00:01</span>
      </div>
      <Taskbar />
    </div>
  );
}
